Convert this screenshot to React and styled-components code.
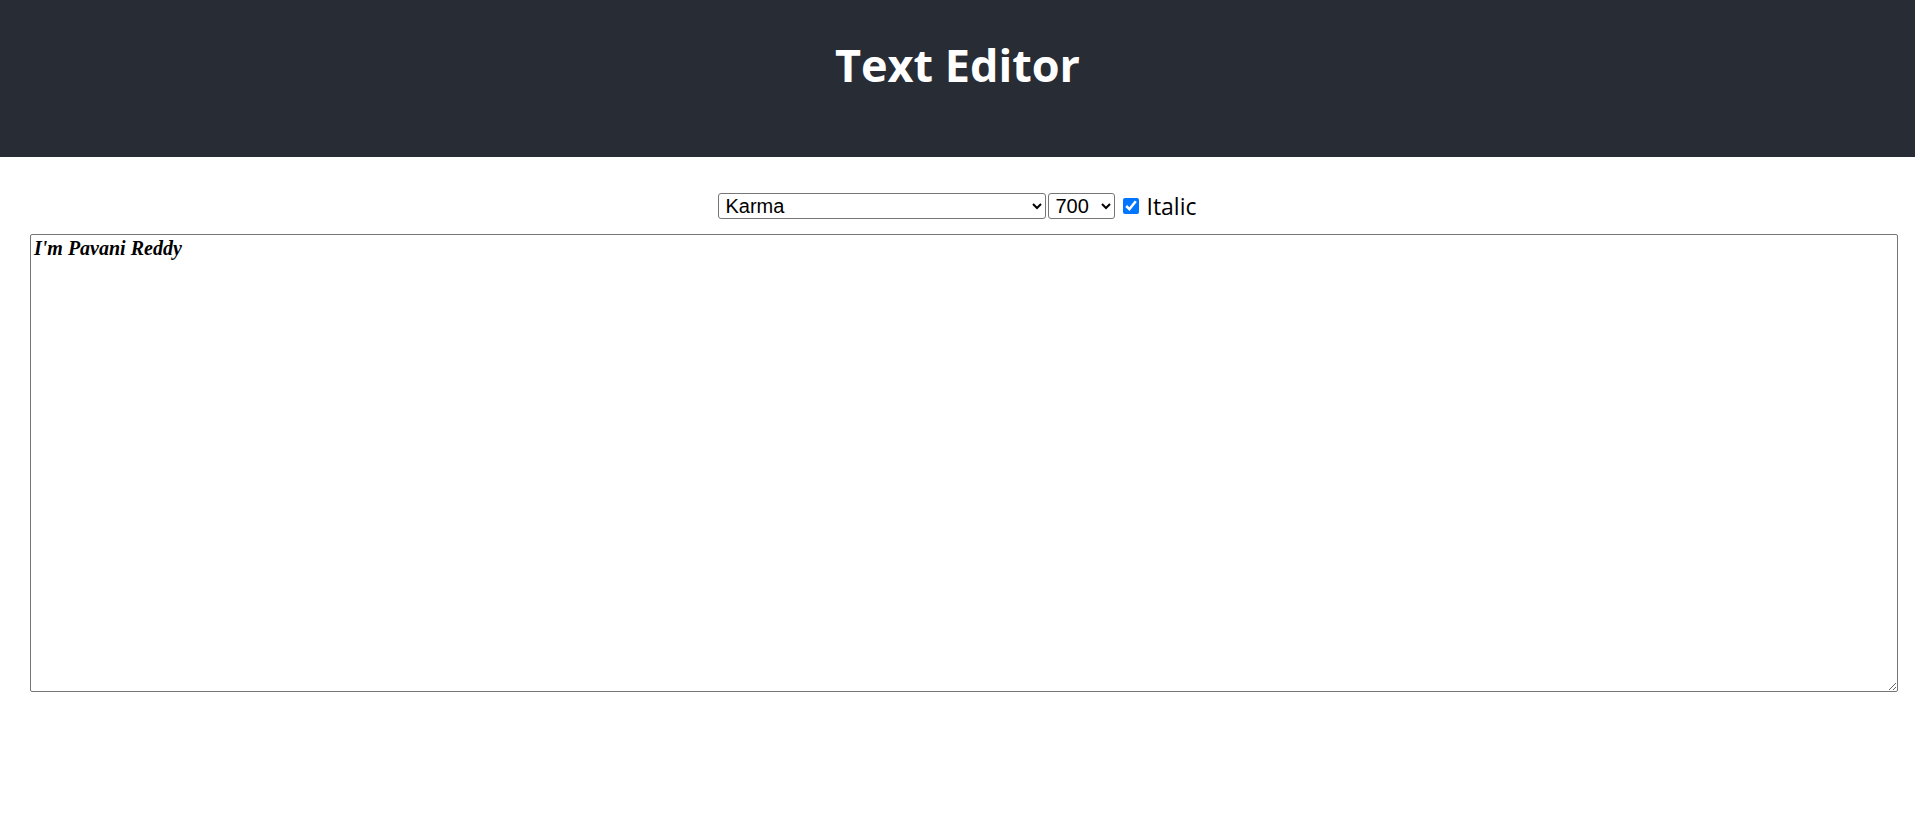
import React, { useState } from "react";
import styled, { createGlobalStyle } from "styled-components";

const GlobalStyle = createGlobalStyle`
  body {
    margin: 0;
    background: #ffffff;
    font-family: "Open Sans", "Noto Sans", sans-serif;
  }
`;

const Header = styled.header`
  height: 157px;
  background: #282c34;
  display: flex;
  justify-content: center;
  align-items: flex-start;
`;

const Title = styled.h1`
  margin: 38px 0 0 0;
  color: #ffffff;
  font-size: 45px;
  font-weight: 700;
  line-height: 1.2;
`;

const Controls = styled.div`
  display: flex;
  justify-content: center;
  align-items: center;
  margin-top: 36px;
  height: 26px;
`;

const Select = styled.select`
  width: ${(p) => p.$width}px;
  height: 26px;
  font-family: "Liberation Sans", Arial, sans-serif;
  font-size: 20px;
  color: #000;
  background: #fff;
  border: 1px solid #767676;
  border-radius: 3px;
  padding: 0 2px;
  margin: 0 2px 0 0;
`;

const CheckLabel = styled.label`
  display: flex;
  align-items: center;
  margin-left: 6px;
  font-size: 23px;
  color: #000;
`;

const Check = styled.input`
  width: 16px;
  height: 16px;
  margin: 0 7px 0 0;
  accent-color: #0075ff;
`;

const Editor = styled.textarea`
  display: block;
  box-sizing: border-box;
  margin: 15px 17px 0 30px;
  width: calc(100% - 47px);
  height: 458px;
  padding: 2px 3px;
  border: 1px solid #767676;
  border-radius: 2px;
  font-family: "Liberation Serif", "Times New Roman", serif;
  font-size: 20px;
  font-weight: ${(p) => p.$weight};
  font-style: ${(p) => (p.$italic ? "italic" : "normal")};
  color: #000;
  resize: both;
`;

const fonts = ["Karma", "Roboto", "Lato", "Open Sans", "Inter"];
const weights = ["100", "200", "300", "400", "500", "600", "700", "800", "900"];

function App() {
  const [font, setFont] = useState("Karma");
  const [weight, setWeight] = useState("700");
  const [italic, setItalic] = useState(true);
  const [text, setText] = useState("I'm Pavani Reddy");

  return (
    <>
      <GlobalStyle />
      <Header>
        <Title>Text Editor</Title>
      </Header>
      <Controls>
        <Select $width={328} value={font} onChange={(e) => setFont(e.target.value)}>
          {fonts.map((f) => (
            <option key={f} value={f}>
              {f}
            </option>
          ))}
        </Select>
        <Select $width={67} value={weight} onChange={(e) => setWeight(e.target.value)}>
          {weights.map((w) => (
            <option key={w} value={w}>
              {w}
            </option>
          ))}
        </Select>
        <CheckLabel>
          <Check type="checkbox" checked={italic} onChange={(e) => setItalic(e.target.checked)} />
          Italic
        </CheckLabel>
      </Controls>
      <Editor
        $weight={weight}
        $italic={italic}
        value={text}
        onChange={(e) => setText(e.target.value)}
      />
    </>
  );
}

export default App;
